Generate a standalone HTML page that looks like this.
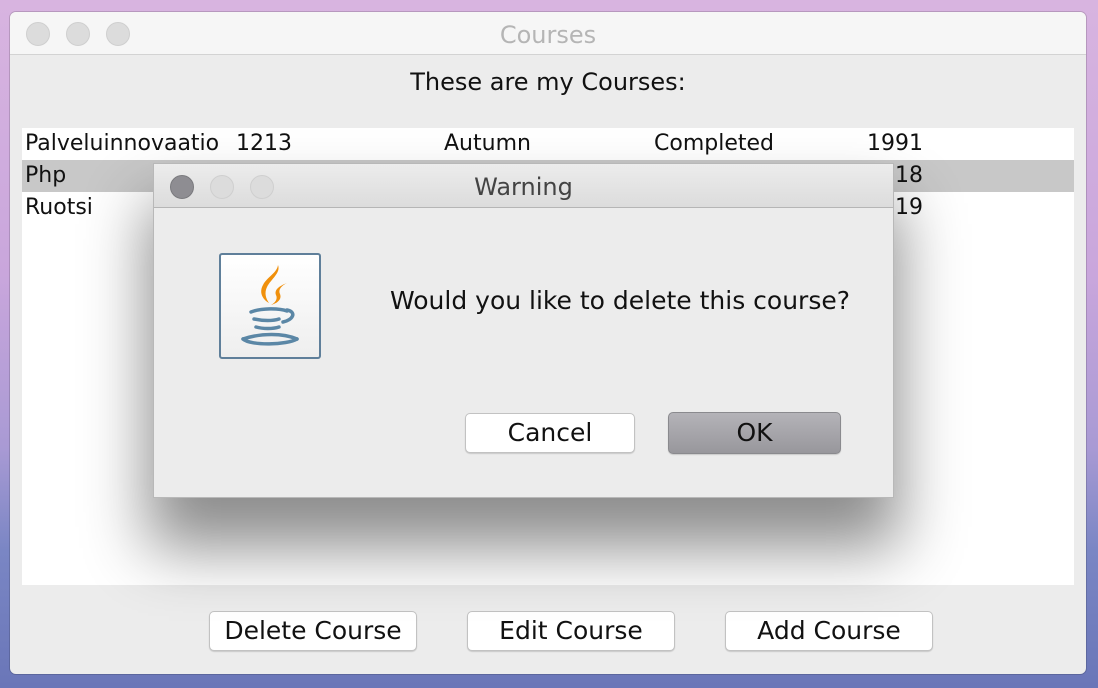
<!DOCTYPE html>
<html><head><meta charset="utf-8"><style>
*{margin:0;padding:0;box-sizing:border-box}
body{width:1098px;height:688px;overflow:hidden;position:relative;font-family:"DejaVu Sans","Liberation Sans",sans-serif;
background:linear-gradient(180deg,#d8b4e0 0%,#c9a6dc 40%,#a99ad4 65%,#7a86c4 80%,#6a76b8 100%)}
.win{position:absolute;left:10px;top:12px;width:1076px;height:662px;background:#ececec;border-radius:6px;overflow:hidden;box-shadow:0 0 0 1px rgba(0,0,0,.15)}
.tb{height:43px;background:#f6f6f6;border-bottom:1px solid #d3d3d3;position:relative}
.dot{position:absolute;width:24px;height:24px;border-radius:50%;background:#dcdcdc;border:1px solid #cfcfcf;top:10px}
.title{position:absolute;left:0;right:0;top:9px;text-align:center;font-size:24px;color:#b5b5b5}
.hdr{position:absolute;top:56px;left:0;right:0;text-align:center;font-size:24px;color:#111}
.tbl{position:absolute;left:12px;top:116px;width:1052px;height:457px;background:#fff}
.row{position:absolute;left:0;width:1052px;height:32px;font-size:22px;color:#111}
.row span{position:absolute;top:3px}
.btn{position:absolute;height:40px;background:#fff;border:1px solid #c2c2c2;border-radius:5px;font-size:25px;text-align:center;line-height:37px;color:#111;box-shadow:0 1px 1px rgba(0,0,0,.15)}
.dlg{position:absolute;left:153px;top:163px;width:741px;height:335px;background:#ececec;border:1px solid #b8b8b8;box-shadow:0 45px 60px 5px rgba(0,0,0,.45)}
.dtb{height:44px;background:linear-gradient(#ececec,#dcdcdc);border-bottom:1px solid #b5b5b5;position:relative}
</style></head><body>
<div class="win">
 <div class="tb">
  <div class="dot" style="left:16px"></div><div class="dot" style="left:56px"></div><div class="dot" style="left:96px"></div>
  <div class="title">Courses</div>
 </div>
 <div class="hdr">These are my Courses:</div>
 <div class="tbl">
  <div class="row" style="top:0"><span style="left:3px">Palveluinnovaatio</span><span style="left:214px">1213</span><span style="left:422px">Autumn</span><span style="left:632px">Completed</span><span style="left:845px">1991</span></div>
  <div class="row" style="top:32px;background:#c8c8c8"><span style="left:3px">Php</span><span style="left:845px">2018</span></div>
  <div class="row" style="top:64px"><span style="left:3px">Ruotsi</span><span style="left:845px">2019</span></div>
 </div>
 <div class="btn" style="left:199px;top:599px;width:208px">Delete Course</div>
 <div class="btn" style="left:457px;top:599px;width:208px">Edit Course</div>
 <div class="btn" style="left:715px;top:599px;width:208px">Add Course</div>
</div>
<div class="dlg">
 <div class="dtb">
  <div class="dot" style="left:16px;top:11px;background:#8e8d92;border-color:#7a7a7e"></div>
  <div class="dot" style="left:56px;top:11px"></div><div class="dot" style="left:96px;top:11px"></div>
  <div style="position:absolute;left:0;right:0;top:9px;text-align:center;font-size:24px;color:#444">Warning</div>
 </div>
 <div style="position:absolute;left:65px;top:89px;width:102px;height:106px;border:2px solid #5f7f9a;border-radius:3px;background:linear-gradient(#fff,#eee)">
  <svg width="98" height="102" viewBox="0 0 98 102">
   <path d="M57 10 C60 18 50 24 46 32 C43 38 45 44 48 48 C41 44 38 37 42 30 C46 22 56 18 57 10Z" fill="#f0900c"/>
   <path d="M66 28 C58 31 53 35 55 40 C57 44 54 48 50 50 C57 48 61 44 59 39 C57 35 60 31 66 28Z" fill="#f0900c"/>
   <g fill="none" stroke="#5b87a6" stroke-width="3.5" stroke-linecap="round">
    <path d="M30 57 C40 53 58 53 66 56"/><path d="M66 55 C76 57 72 65 62 67"/>
    <path d="M33 64 C42 66 52 66 58 64"/>
    <path d="M35 72 C42 74 52 74 58 72"/>
    <path d="M22 84 C30 91 66 90 76 84"/>
    <path d="M22 84 C40 78 62 78 76 84"/>
   </g>
  </svg>
 </div>
 <div style="position:absolute;left:236px;top:122px;font-size:25px;color:#111">Would you like to delete this course?</div>
 <div class="btn" style="left:311px;top:249px;width:170px;height:40px">Cancel</div>
 <div class="btn" style="left:514px;top:248px;width:173px;height:42px;background:linear-gradient(#b4b3b8,#98979c);border-color:#8a8a8e;line-height:40px">OK</div>
</div>
</body></html>
